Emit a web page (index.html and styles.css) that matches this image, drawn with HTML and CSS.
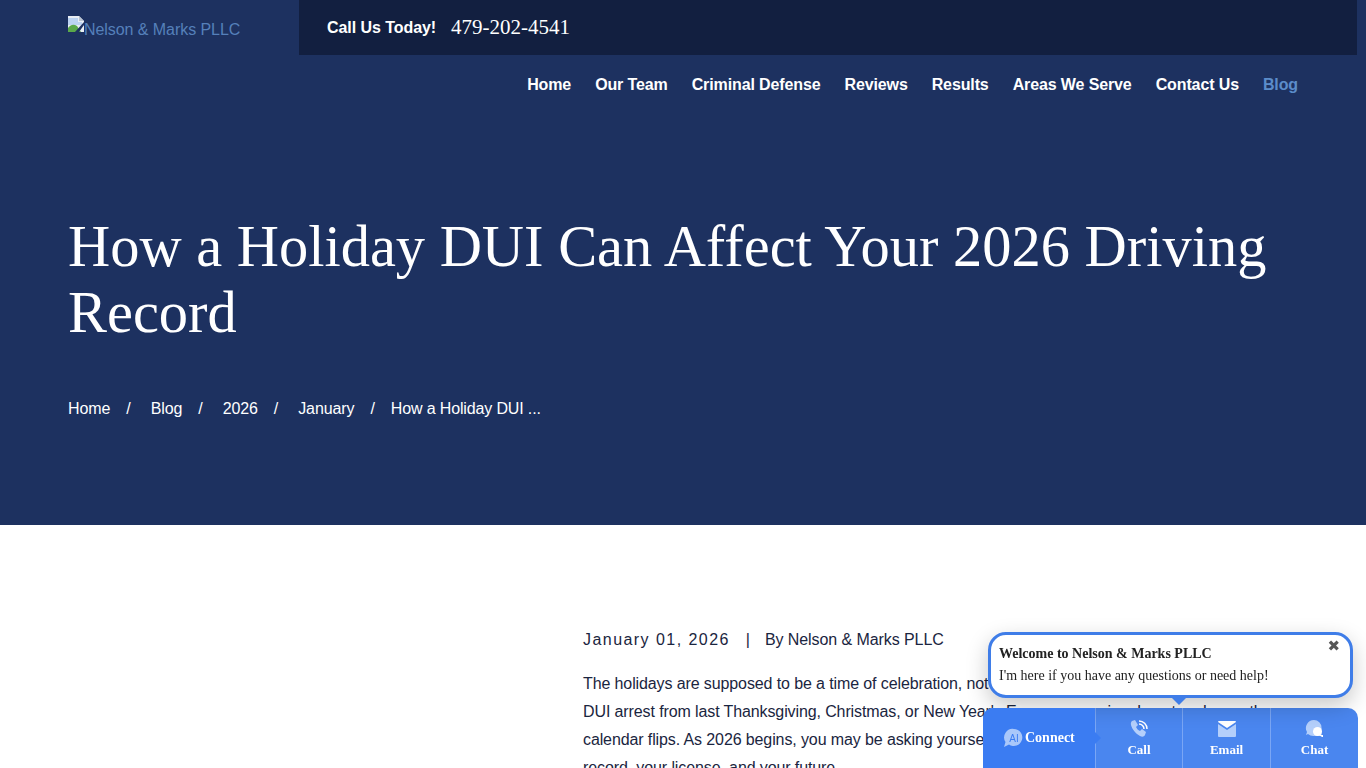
FILE: index.html
```html
<!DOCTYPE html>
<html lang="en">
<head>
    <meta charset="UTF-8">
    <title>How a Holiday DUI Can Affect Your 2026 Driving Record</title>
    <link rel="stylesheet" href="styles.css">
</head>
<body>
<header class="hero">
    <div class="header-row">
        <a class="logo" href="#">
            <svg class="broken-img" width="16" height="16" viewBox="0 0 16 16">
                <path d="M0 0H11L16 5V16H0Z" fill="#e9eef5"/>
                <path d="M11 0L16 5H11Z" fill="#b9c4d2"/>
                <path d="M0 2H10V6H14V9H0Z" fill="#bcd3f2"/>
                <path d="M0 16V12C3 8 6 8 9 10L13 16Z" fill="#5aa84a"/>
                <path d="M7 16L16 6V9L11 16Z" fill="#1d3160"/>
            </svg><span>Nelson &amp; Marks PLLC</span>
        </a>
        <div class="header-right">
            <div class="call-bar">
                <strong>Call Us Today!</strong>
                <a href="#">479-202-4541</a>
            </div>
            <nav class="main-nav">
                <a href="#">Home</a>
                <a href="#">Our Team</a>
                <a href="#">Criminal Defense</a>
                <a href="#">Reviews</a>
                <a href="#">Results</a>
                <a href="#">Areas We Serve</a>
                <a href="#">Contact Us</a>
                <a href="#" class="active">Blog</a>
            </nav>
        </div>
    </div>
    <div class="hero-text">
        <h1>How a Holiday DUI Can Affect Your 2026 Driving Record</h1>
        <div class="crumbs">
            <a href="#">Home</a><span>/</span>
            <a href="#">Blog</a><span>/</span>
            <a href="#">2026</a><span>/</span>
            <a href="#">January</a><span>/</span>
            <a href="#" class="crumb-last">How a Holiday DUI ...</a>
        </div>
    </div>
</header>

<main class="content">
    <article class="post">
        <div class="meta">
            <span class="date">January 01, 2026</span>
            <span class="sep">|</span>
            <span>By Nelson &amp; Marks PLLC</span>
        </div>
        <p>The holidays are supposed to be a time of celebration, not legal trouble. But if you are dealing with a DUI arrest from last Thanksgiving, Christmas, or New Year's Eve, your worries do not end once the calendar flips. As 2026 begins, you may be asking yourself how that charge will affect your driving record, your license, and your future.</p>
    </article>
</main>

<div class="widget">
    <div class="bubble">
        <button class="bubble-close">&#10006;</button>
        <div class="bubble-title">Welcome to Nelson &amp; Marks PLLC</div>
        <div class="bubble-text">I'm here if you have any questions or need help!</div>
    </div>
    <div class="widget-bar">
        <a class="connect" href="#">
            <svg width="20" height="20" viewBox="0 0 20 20">
                <path d="M11 1a8.500 8.500 0 1 1-5 15.500L1 19l1.500-5A8.500 8.500 0 0 1 11 1Z" fill="#a9c7fa"/>
                <text x="11" y="13.500" class="ai-mark">AI</text>
            </svg>
            <span>Connect</span>
        </a>
        <a class="action action-call" href="#">
            <svg width="20" height="20" viewBox="0 0 20 20">
                <path d="M3 2l3-1 3 5-2 2c1 2 2 3 4 4l2-2 4 3-1 3c-1 2-3 2-5 1C7 15 3 10 2 6c-.4-2 0-3 1-4Z" fill="#b4cffb"/>
                <path d="M10 5a5 5 0 0 1 5 5M10 2a8 8 0 0 1 8 8" fill="none" stroke="#fff" stroke-width="1.500"/>
            </svg>
            <span>Call</span>
        </a>
        <a class="action" href="#">
            <svg width="20" height="16" viewBox="0 0 20 16">
                <path d="M1 3l9 6 9-6v12a1 1 0 0 1-1 1H2a1 1 0 0 1-1-1Z" fill="#b4cffb"/>
                <path d="M2 0h16a1 1 0 0 1 1 1L10 7 1 1a1 1 0 0 1 1-1Z" fill="#fff"/>
            </svg>
            <span>Email</span>
        </a>
        <a class="action" href="#">
            <svg width="20" height="20" viewBox="0 0 20 20">
                <path d="M9 1a7.500 7.500 0 0 1 7.500 7.500V17H9A8 8 0 0 1 3 15L1 16l1-3A8 8 0 0 1 9 1Z" fill="#b4cffb"/>
                <circle cx="12.500" cy="12.500" r="4.500" fill="#fff"/>
                <path d="M14 16h4v2h-1Z" fill="#fff"/>
            </svg>
            <span>Chat</span>
        </a>
    </div>
</div>
</body>
</html>
```

FILE: styles.css
```css
html, body {
    height: 100%;
    margin: 0;
    overflow: hidden;
}
body {
    font-family: "Liberation Sans", Arial, sans-serif;
    font-size: 16px;
    color: #1a2540;
    background: white;
}
a {
    color: inherit;
    text-decoration: none;
}
.hero {
    height: 525px;
    box-sizing: border-box;
    background-color: #1d3160;
    color: white;
}
.header-row {
    display: flex;
}
.logo {
    width: 299px;
    box-sizing: border-box;
    padding: 16px 0 0 68px;
    line-height: 27px;
    letter-spacing: -0.06px;
    color: #5580ba;
    display: block;
    height: 55px;
}
.broken-img {
    vertical-align: top;
}
.header-right {
    width: 1058px;
}
.call-bar {
    height: 55px;
    box-sizing: border-box;
    padding-left: 28px;
    background-color: #121f40;
    display: flex;
    align-items: center;
    gap: 15px;
}
.call-bar strong {
    letter-spacing: -0.06px;
}
.call-bar a {
    font-family: "Liberation Serif", "Times New Roman", serif;
    font-size: 21px;
}
.main-nav {
    display: flex;
    justify-content: flex-end;
    gap: 24px;
    padding: 20px 59px 0 0;
    font-weight: bold;
    line-height: 19px;
    letter-spacing: -0.12px;
}
.main-nav .active {
    color: #5b8cca;
}
.hero-text {
    padding: 120px 68px 0;
}
h1 {
    margin: 0;
    font-family: "Liberation Serif", "Times New Roman", serif;
    font-size: 58.45px;
    font-weight: normal;
    line-height: 66px;
}
.crumbs {
    margin-top: 52px;
    display: flex;
    line-height: 22px;
    letter-spacing: -0.1px;
}
.crumbs span {
    margin: 0 20px 0 16px;
}
.crumbs .crumb-last {
    margin-left: -4px;
    letter-spacing: -0.14px;
}
.content {
    padding: 104px 0 0 583px;
}
.post {
    width: 715px;
    letter-spacing: -0.08px;
}
.meta {
    display: flex;
    line-height: 22px;
}
.date {
    letter-spacing: 1.45px;
}
.sep {
    margin: 0 15px 0 16px;
}
.post p {
    margin: 19px 0 0;
    line-height: 28px;
    letter-spacing: -0.11px;
}

/* chat widget */
.widget {
    position: fixed;
    left: 983px;
    bottom: 0;
    width: 375px;
    font-family: "Liberation Serif", "Times New Roman", serif;
}
.bubble {
    position: relative;
    width: 365px;
    height: 66px;
    box-sizing: border-box;
    margin: 0 0 10px 5px;
    padding: 10px 8px;
    background: white;
    border: 3px solid #3f7de8;
    border-radius: 18px;
    box-shadow: 0 8px 22px rgba(0, 0, 0, 0.22);
    color: #222;
    font-size: 14px;
}
.bubble::after {
    content: "";
    position: absolute;
    left: 179px;
    bottom: -10px;
    border: 9px solid transparent;
    border-bottom: 0;
    border-top-color: #3f7de8;
}
.bubble-title {
    font-weight: bold;
    line-height: 17px;
}
.bubble-text {
    margin-top: 5px;
    line-height: 17px;
}
.bubble-close {
    position: absolute;
    top: 2px;
    right: 10px;
    padding: 0;
    border: 0;
    background: none;
    color: #555;
    font-size: 15px;
    font-family: "DejaVu Sans", sans-serif;
}
.widget-bar {
    display: flex;
    height: 60px;
    background-color: #4a86ef;
    border-radius: 10px 10px 0 0;
    color: white;
    font-size: 13px;
    font-weight: bold;
    overflow: hidden;
}
.connect {
    position: relative;
    width: 112px;
    display: flex;
    align-items: center;
    gap: 2px;
    padding: 0 0 0 20px;
    box-sizing: border-box;
    background-color: #3b7cf2;
    font-size: 14px;
}
.connect::after {
    content: "";
    position: absolute;
    right: -6px;
    top: 24px;
    border: 6px solid transparent;
    border-right: 0;
    border-left-color: #3b7cf2;
}
.ai-mark {
    font-family: "Liberation Sans", Arial, sans-serif;
    font-size: 10px;
    font-weight: normal;
    fill: #3b7cf2;
    text-anchor: middle;
}
.action {
    flex: 1;
    height: 60px;
    box-sizing: border-box;
    padding-top: 11px;
    display: flex;
    flex-direction: column;
    align-items: center;
    border-left: 1px solid #7aa6f5;
}
.action-call {
    flex: 0 0 87px;
}
.action svg {
    height: 20px;
}
.action span {
    margin-top: 3px;
    line-height: 16px;
}
```
